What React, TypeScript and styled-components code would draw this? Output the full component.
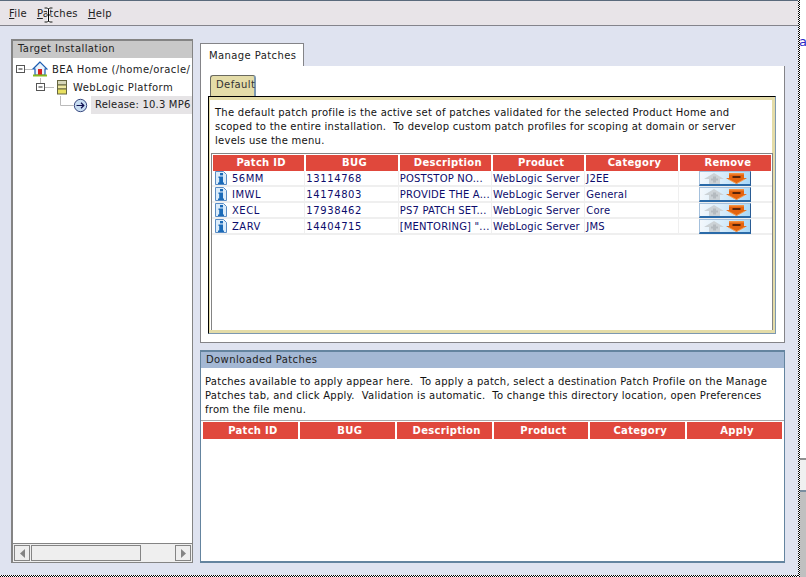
import React from "react";
import styled, { createGlobalStyle } from "styled-components";

const Global = createGlobalStyle`
  html, body { margin: 0; padding: 0; background: #fff; overflow: hidden; }
  body { font-family: "DejaVu Sans", sans-serif; font-size: 10px; color: #111; }
`;

const Screen = styled.div`
  width: 806px; height: 577px; display: flex; overflow: hidden; position: relative; background: #fff;
`;
const Frame = styled.div`
  width: 798px; height: 577px; display: flex; flex-direction: column; flex: none;
`;
const Dots = styled.div`
  flex: none;
  background: repeating-conic-gradient(#000 0 25%, #fff 0 50%) 0 0 / 2px 2px;
`;
const VDots = styled(Dots)`width: 2px; height: 577px;`;
const HDots = styled(Dots)`height: 2px; width: 100%;`;
const Strip = styled.div`
  flex: 1; display: flex; flex-direction: column; overflow: hidden;
`;
const StripTop = styled.div`
  height: 458px; flex: none; background: #fff; color: #2a2ac8; font-size: 13px; padding: 34px 0 0 0;
  box-sizing: border-box; line-height: 16px; text-indent: -1px; overflow: hidden;
`;
const StripMid = styled.div`
  height: 32px; flex: none; box-sizing: border-box; background: #f0f0f0; border-top: 2px solid #909090;
`;
const StripBottom = styled.div`
  flex: 1; background: #c0c0c0; border-top: 2px solid #7a8ea0;
`;
const MenuBar = styled.div`
  height: 24px; flex: none; background: #e8e4e8; border-top: 1px solid #5a6a7c; border-bottom: 1px solid #84848c;
  display: flex; align-items: center; padding-left: 9px; gap: 10px; font-size: 10px; letter-spacing: .3px;
`;
const MenuItem = styled.span`color: #222; u { text-decoration: underline; }`;
const Desk = styled.div`
  flex: 1; background: #dfe3f0; display: flex; gap: 7px; padding: 13px 13px 12px 11px; min-height: 0;
`;
const TreePanel = styled.section`
  width: 182px; flex: none; box-sizing: border-box; border: 1px solid #848484; border-top-width: 2px; border-left-width: 2px;
  background: #fff; display: flex; flex-direction: column;
`;
const PanelTitle = styled.div`
  height: 17px; background: #c8c8c8; padding-left: 5px; line-height: 16px; letter-spacing: .4px; color: #222; flex: none;
`;
const Tree = styled.div`flex: 1; padding-top: 2px; overflow: hidden;`;
const TreeRow = styled.div`
  height: 18px; display: flex; align-items: center; white-space: nowrap; letter-spacing: .4px; color: #222; overflow: hidden;
  svg { flex: none; }
`;
const Selected = styled.span`
  background: #e6e4e6; flex: 1; height: 18px; line-height: 18px; padding-left: 4px; margin-left: 3px; letter-spacing: .2px;
`;
const RowLabel = styled.span<{ $shift?: number }>`margin-left: ${(p) => p.$shift ?? 4}px;`;
const HScroll = styled.div`
  flex: none; border-top: 1px solid #848484; display: flex; background: #efefef; padding: 1px; box-sizing: border-box; height: 19px; gap: 1px;
`;
const ScrollBtn = styled.div`
  width: 14px; border: 1px solid #848484; background: #eee; display: flex; align-items: center; justify-content: center; flex: none;
`;
const Thumb = styled.div`width: 108px; border: 1px solid #848484; background: #eeeeee; flex: none;`;
const Track = styled.div`flex: 1;`;

const Right = styled.div`flex: 1; display: flex; flex-direction: column; min-width: 0;`;
const TabRow = styled.div`height: 23px; flex: none; padding-top: 4px; display: flex;`;
const Tab = styled.div`
  width: 104px; box-sizing: border-box; border: 1px solid #848488; border-bottom: none; background: #fff;
  padding-left: 8px; line-height: 23px; letter-spacing: .4px; color: #222; white-space: nowrap;
`;
const TabBody = styled.div`
  height: 277px; flex: none; box-sizing: border-box; background: #fff; border: 1px solid #848488; border-top: none; padding: 9px 8px 8px 7px; display: flex; flex-direction: column;
`;
const SmallTab = styled.div`
  width: 46px; height: 21px; flex: none; margin-left: 2px; box-sizing: border-box; background: #e4dca8; border: 1px solid #6a6a60; border-bottom: none; border-right: 2px solid #7c98b0;
  border-radius: 3px 3px 0 0; padding-left: 5px; line-height: 18px; letter-spacing: .4px; color: #333; white-space: nowrap;
`;
const Profile = styled.div`
  flex: 1; box-sizing: border-box; background: #fff; border-style: solid; border-width: 1px; border-color: #000 #7c98b0 #7c98b0 #000;
  display: flex; flex-direction: column; min-height: 0;
  box-shadow: inset 0 3px 0 #e4dca8, inset -3px 0 0 #e4dca8, inset 0 -3px 0 #e4dca8, inset 1px 0 0 #e4dca8;
`;
const Para = styled.p<{ $pad: string }>`
  margin: 0; font-size: 10px; line-height: 14px; letter-spacing: .26px; color: #111; white-space: pre;
  padding: ${(p) => p.$pad};
`;
const TableWrap = styled.div`
  margin: 0 2px 3px 2px; border: 1px solid #848484; border-bottom: none; flex: 1; background: #fff; padding: 1px 0 0 0;
`;
const HeadRow = styled.div<{ $h: number; $px: number }>`
  display: grid; grid-template-columns: repeat(6, minmax(0, 1fr)); column-gap: 2px; height: ${(p) => p.$h}px; padding: 0 ${(p) => p.$px}px;
`;
const HeadCell = styled.div<{ $h: number }>`
  background: #e0483c; color: #fff; font-weight: bold; text-align: center; line-height: ${(p) => p.$h}px; letter-spacing: .3px; font-size: 10px; padding-left: 5px;
`;
const Row = styled.div`
  display: grid; grid-template-columns: repeat(6, minmax(0, 1fr)); column-gap: 2px; height: 16px; padding: 0 1px; box-sizing: border-box;
  border-bottom: 2px solid #efefef; color: #0c0c6c; letter-spacing: .2px;
`;
const Cell = styled.div<{ $wide?: boolean }>`
  line-height: 15px; white-space: nowrap; display: flex; align-items: center; height: 14px;
  box-shadow: 1px 0 0 #efefef;
  ${(p) => (p.$wide ? "letter-spacing: .6px;" : "")}
`;
const IdCell = styled(Cell)`gap: 4px; padding-left: 1px; letter-spacing: .5px;`;
const ActionCell = styled(Cell)`justify-content: center; box-shadow: none;`;
const ActionBtn = styled.div`
  width: 52px; height: 15px; box-sizing: border-box; margin-top: 1px; flex: none;
  border: 1px solid #a4c0dc; border-right-color: #2a5c94; border-bottom: 2px solid #2a6aa8;
  background: linear-gradient(100deg, #f4f8fc 0%, #d8ecfa 45%, #a8d8f8 100%);
  display: flex; align-items: center; justify-content: center; gap: 1px;
`;
const Downloads = styled.section`
  margin-top: 7px; flex: 1; box-sizing: border-box; background: #fff; border: 1px solid #64849f; border-width: 2px 1px 2px 1px; display: flex; flex-direction: column; min-height: 0;
`;
const BlueTitle = styled.div`
  height: 16px; flex: none; background: #a4b8d4; padding-left: 5px; line-height: 15px; letter-spacing: .4px; color: #222;
`;
const DownloadTable = styled.div`flex: 1; border-top: 1px solid #a8a8a8; padding-top: 1px;`;

const Cursor = styled.svg`position: absolute; left: 44px; top: 7px;`;

const Info = () => (
  <svg width="14" height="14" viewBox="0 0 14 14">
    <path d="M1.5 .5h8l3 3v10h-11z" fill="#dcecfa" stroke="#5a8cc4" />
    <rect x="6" y="2" width="3" height="2.4" fill="#1a6ab8" />
    <path d="M4.5 5.5h4.5v6h1v1.5h-6v-1.5h1.2v-4.5h-.7z" fill="#1a6ab8" />
  </svg>
);
const PlusArrow = () => (
  <svg width="21" height="11" viewBox="0 0 21 11">
    <path d="M0 6l10-6 10 6h-4v5H5V6z" fill="#ccd2d6" />
    <path d="M9 3.500h3v2h2v2h-2v2H9v-2H7v-2h2z" fill="#b4babf" />
  </svg>
);
const MinusArrow = () => (
  <svg width="21" height="11" viewBox="0 0 21 11">
    <path d="M3 0h15v5h3L10.500 11 0 5h3z" fill="#e4640f" />
    <path d="M3 0h15v1.500H3z" fill="#f49040" />
    <rect x="6.500" y="3" width="8" height="2" fill="#5a2408" />
    <path d="M2 6l8.500 4.500L19 6" fill="none" stroke="#f8a860" strokeWidth=".8" />
  </svg>
);

const rows = [
  ["56MM", "13114768", "POSTSTOP NO...", "WebLogic Server", "J2EE"],
  ["IMWL", "14174803", "PROVIDE THE A...", "WebLogic Server", "General"],
  ["XECL", "17938462", "PS7 PATCH SET...", "WebLogic Server", "Core"],
  ["ZARV", "14404715", "[MENTORING] \"...", "WebLogic Server", "JMS"],
];

const Head = ({ last, h, px }: { last: string; h: number; px: number }) => (
  <HeadRow $h={h} $px={px}>
    {["Patch ID", "BUG", "Description", "Product", "Category", last].map((t) => (
      <HeadCell key={t} $h={h}>{t}</HeadCell>
    ))}
  </HeadRow>
);

export default function App() {
  return (
    <Screen>
      <Global />
      <Frame>
        <MenuBar>
          <MenuItem><u>F</u>ile</MenuItem>
          <MenuItem><u>P</u>atches</MenuItem>
          <MenuItem><u>H</u>elp</MenuItem>
        </MenuBar>
        <Desk>
          <TreePanel>
            <PanelTitle>Target Installation</PanelTitle>
            <Tree>
              <TreeRow>
                <svg width="35" height="18" viewBox="0 0 35 18">
                  <rect x="3.5" y="5.5" width="8" height="7" fill="#fff" stroke="#555" />
                  <path d="M5.5 9h4" stroke="#222" />
                  <path d="M12 9.5h7" stroke="#bbb" />
                  <path d="M27 2L20 9h2v6h10V9h2z" fill="#e8f2fc" stroke="#1c5cb0" strokeWidth="1.2" />
                  <rect x="25" y="9" width="4" height="6" fill="#d82020" />
                  <path d="M20 15.5h14" stroke="#88b820" strokeWidth="2" />
                </svg>
                <RowLabel>BEA Home (/home/oracle/</RowLabel>
              </TreeRow>
              <TreeRow>
                <svg width="55" height="18" viewBox="0 0 55 18">
                  <path d="M27.5 0v5" stroke="#bbb" />
                  <rect x="23.5" y="5.5" width="8" height="7" fill="#fff" stroke="#555" />
                  <path d="M25.5 9h4" stroke="#222" />
                  <path d="M32 9.5h9" stroke="#bbb" />
                  <rect x="44.5" y="2.5" width="9" height="4.5" fill="#d6d6b8" stroke="#666640" />
                  <rect x="44.5" y="7" width="9" height="4" fill="#eee8a0" stroke="#666640" />
                  <rect x="44.5" y="11" width="9" height="5" fill="#e8e060" stroke="#666640" />
                </svg>
                <RowLabel $shift={5}>WebLogic Platform</RowLabel>
              </TreeRow>
              <TreeRow>
                <svg width="75" height="18" viewBox="0 0 75 18">
                  <path d="M47.5 0v9.5h13" fill="none" stroke="#bbb" />
                  <circle cx="67.5" cy="9.5" r="6.2" fill="#c8ddf2" stroke="#3a4a80" />
                  <path d="M63.5 9.5h7M68 6.8l2.8 2.7L68 12.2" fill="none" stroke="#101050" strokeWidth="1.2" />
                </svg>
                <Selected>Release: 10.3 MP6</Selected>
              </TreeRow>
            </Tree>
            <HScroll>
              <ScrollBtn>
                <svg width="5" height="9" viewBox="0 0 5 9"><path d="M5 0v9L0 4.500z" fill="#848484" /></svg>
              </ScrollBtn>
              <Thumb />
              <Track />
              <ScrollBtn>
                <svg width="5" height="9" viewBox="0 0 5 9"><path d="M0 0v9l5-4.500z" fill="#848484" /></svg>
              </ScrollBtn>
            </HScroll>
          </TreePanel>
          <Right>
            <TabRow><Tab>Manage Patches</Tab></TabRow>
            <TabBody>
              <SmallTab>Default</SmallTab>
              <Profile>
                <Para $pad="9px 6px 5px 6px">{"The default patch profile is the active set of patches validated for the selected Product Home and\nscoped to the entire installation.  To develop custom patch profiles for scoping at domain or server\nlevels use the menu."}</Para>
                <TableWrap>
                  <Head last="Remove" h={16} px={1} />
                  {rows.map((r) => (
                    <Row key={r[0]}>
                      <IdCell><Info />{r[0]}</IdCell>
                      <Cell $wide>{r[1]}</Cell>
                      <Cell>{r[2]}</Cell>
                      <Cell>{r[3]}</Cell>
                      <Cell>{r[4]}</Cell>
                      <ActionCell>
                        <ActionBtn><PlusArrow /><MinusArrow /></ActionBtn>
                      </ActionCell>
                    </Row>
                  ))}
                </TableWrap>
              </Profile>
            </TabBody>
            <Downloads>
              <BlueTitle>Downloaded Patches</BlueTitle>
              <Para $pad="7px 4px 3px 4px">{"Patches available to apply appear here.  To apply a patch, select a destination Patch Profile on the Manage\nPatches tab, and click Apply.  Validation is automatic.  To change this directory location, open Preferences\nfrom the file menu."}</Para>
              <DownloadTable>
                <Head last="Apply" h={17} px={2} />
              </DownloadTable>
            </Downloads>
          </Right>
        </Desk>
        <HDots />
      </Frame>
      <VDots />
      <Strip>
        <StripTop>a</StripTop>
        <StripMid />
        <StripBottom />
      </Strip>
      <Cursor width="9" height="16" viewBox="0 0 9 16">
        <path d="M0.500 1h3l1 1 1-1h3M4.500 2v12M0.500 15h3l1-1 1 1h3M2.500 8h4" fill="none" stroke="#fff" strokeWidth="2.500" />
        <path d="M0.500 1h3l1 1 1-1h3M4.500 2v12M0.500 15h3l1-1 1 1h3M2.500 8h4" fill="none" stroke="#000" />
      </Cursor>
    </Screen>
  );
}
